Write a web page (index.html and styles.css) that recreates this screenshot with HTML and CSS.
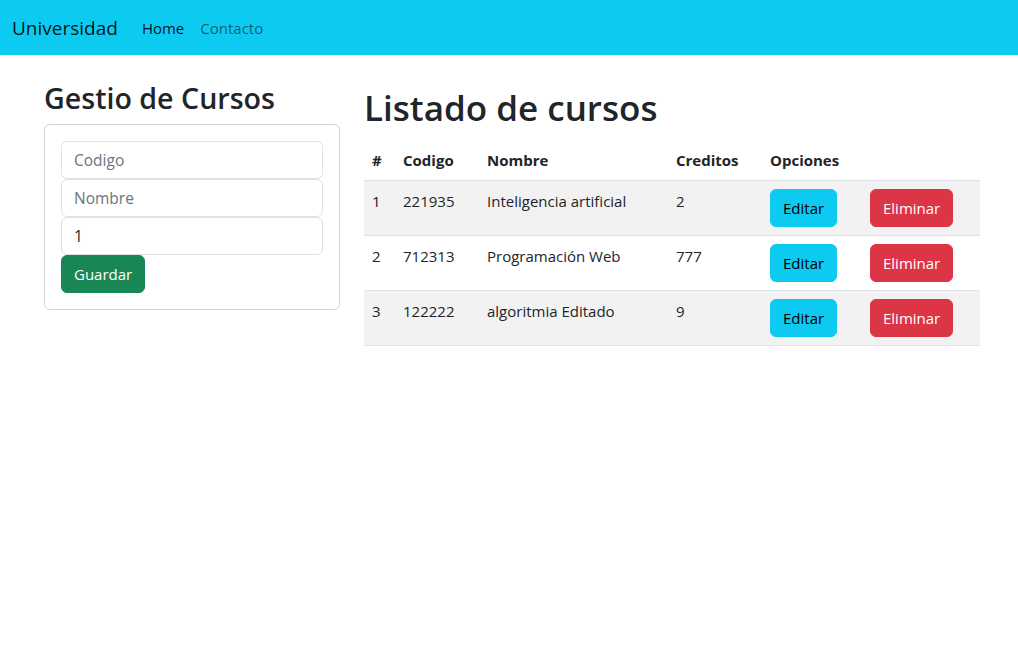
FILE: index.html
```html
<!DOCTYPE html>
<html lang="es">
<head>
<meta charset="utf-8">
<title>Universidad</title>
<link rel="stylesheet" href="styles.css">
</head>
<body>
<nav class="navbar">
  <a class="brand" href="#">Universidad</a>
  <a class="nav-link active" href="#">Home</a>
  <a class="nav-link" href="#">Contacto</a>
</nav>
<main class="layout">
  <section class="col-side">
    <h2 class="side-title">Gestio de Cursos</h2>
    <div class="card">
      <input class="field" type="text" placeholder="Codigo">
      <input class="field" type="text" placeholder="Nombre">
      <input class="field" type="text" value="1">
      <button class="btn btn-success">Guardar</button>
    </div>
  </section>
  <section class="col-main">
    <h1 class="main-title">Listado de cursos</h1>
    <table class="table">
      <colgroup>
        <col class="c-num"><col class="c-cod"><col class="c-nom"><col class="c-cred"><col class="c-edit"><col class="c-del">
      </colgroup>
      <thead>
        <tr><th>#</th><th>Codigo</th><th>Nombre</th><th>Creditos</th><th>Opciones</th><th></th></tr>
      </thead>
      <tbody>
        <tr class="odd"><td>1</td><td>221935</td><td>Inteligencia artificial</td><td>2</td><td><button class="btn btn-info">Editar</button></td><td><button class="btn btn-danger">Eliminar</button></td></tr>
        <tr><td>2</td><td>712313</td><td>Programación Web</td><td>777</td><td><button class="btn btn-info">Editar</button></td><td><button class="btn btn-danger">Eliminar</button></td></tr>
        <tr class="odd"><td>3</td><td>122222</td><td>algoritmia Editado</td><td>9</td><td><button class="btn btn-info">Editar</button></td><td><button class="btn btn-danger">Eliminar</button></td></tr>
      </tbody>
    </table>
  </section>
</main>
</body>
</html>
```

FILE: styles.css
```css
* { box-sizing: border-box; }
body {
  margin: 0;
  font-family: "Open Sans", "Noto Sans", sans-serif;
  font-size: 15px;
  line-height: 24px;
  color: #212529;
  background: #fff;
}
.navbar {
  height: 55px;
  background: #0dcaf0;
  display: flex;
  align-items: center;
  padding: 0 12px;
}
.brand {
  font-size: 19px;
  color: rgba(0,0,0,.9);
  text-decoration: none;
  margin-right: 16px;
}
.nav-link {
  padding: 0 8px;
  color: rgba(0,0,0,.55);
  text-decoration: none;
}
.nav-link.active { color: rgba(0,0,0,.9); }
.layout {
  display: flex;
  width: 960px;
  margin-left: 32px;
  margin-top: 24px;
}
.col-side { width: 320px; padding: 0 12px; }
.col-main { width: 640px; padding: 5px 12px 0; }
.side-title {
  font-size: 28.6px;
  font-weight: 600;
  line-height: 38px;
  margin: 0 0 7px;
}
.main-title {
  font-size: 35px;
  font-weight: 600;
  line-height: 48px;
  margin: 0 0 8px;
}
.card {
  border: 1px solid rgba(0,0,0,.175);
  border-radius: 6px;
  padding: 16px;
}
.field {
  display: block;
  width: 100%;
  height: 38px;
  padding: 6px 12px;
  font: inherit;
  font-size: 15.5px;
  color: #212529;
  border: 1px solid #dee2e6;
  border-radius: 6px;
  background: #fff;
}
.field::placeholder { color: #6c757d; }
.btn {
  display: inline-block;
  height: 38px;
  padding: 6px 12px;
  font: inherit;
  line-height: 24px;
  border: 1px solid transparent;
  border-radius: 6px;
  cursor: pointer;
}
.btn-success { background: #198754; border-color: #198754; color: #fff; }
.btn-info { background: #0dcaf0; border-color: #0dcaf0; color: #000; }
.btn-danger { background: #dc3545; border-color: #dc3545; color: #fff; }
.table {
  width: 616px;
  border-collapse: collapse;
  table-layout: fixed;
}
.c-num { width: 31px; }
.c-cod { width: 84px; }
.c-nom { width: 189px; }
.c-cred { width: 94px; }
.c-edit { width: 100px; }
.c-del { width: 118px; }
.table th, .table td {
  padding: 8px;
  text-align: left;
  vertical-align: top;
  border-bottom: 1px solid #dee2e6;
  white-space: nowrap;
}
.table th { font-weight: 700; }
.table tr.odd td { background: #f2f2f2; }
```
